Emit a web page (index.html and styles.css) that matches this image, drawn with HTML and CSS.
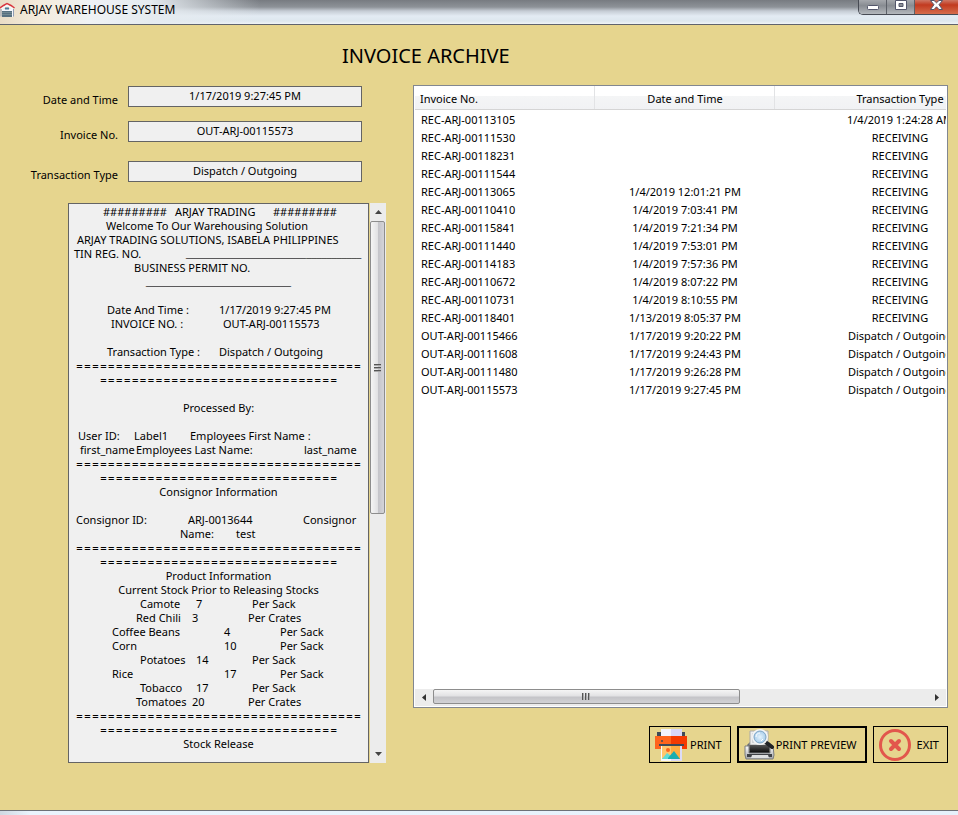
FILE: index.html
```html
<!DOCTYPE html>
<html lang="en">
<head>
<meta charset="utf-8">
<meta name="viewport" content="width=device-width, initial-scale=1">
<title>ARJAY WAREHOUSE SYSTEM</title>
<link rel="stylesheet" href="styles.css">
</head>
<body>
<header class="titlebar">
  <svg class="app-icon" width="15" height="16" viewBox="0 0 15 16" aria-hidden="true">
    <path d="M2 7h11v8H2z" fill="#f4f6fb"/>
    <path d="M0 6 3.500 3.500 7 1.500l4 2L14.500 6" fill="none" stroke="#d9343f" stroke-width="1.500"/>
    <path d="M1.500 7 7 3.500 13 7" fill="none" stroke="#f6f8fb" stroke-width="1.500"/>
    <path d="M1 14.500V7M13.500 14.500V7" stroke="#8f9db4"/>
    <path d="M5 6.500h4" stroke="#4c7c9a" stroke-width="2"/>
    <path d="M2 9h10v6H2z" fill="#577080"/>
    <path d="M2 10.500h10M2 12.500h10" stroke="#728891"/>
  </svg>
  <span class="app-name">ARJAY WAREHOUSE SYSTEM</span>
  <div class="window-buttons">
    <button class="window-button" type="button" aria-label="Minimize"><svg width="12" height="5" viewBox="0 0 12 5"><rect x=".5" y=".5" width="11" height="4" rx="1" fill="#fff" stroke="#53566b"/></svg></button>
    <button class="window-button" type="button" aria-label="Maximize"><svg width="12" height="10" viewBox="0 0 12 10"><path d="M.5.500h11v9H.5zM4 3.500h4v3H4z" fill="#fff" fill-rule="evenodd" stroke="#53566b"/></svg></button>
    <button class="window-button close" type="button" aria-label="Close"><svg width="13" height="10" viewBox="0 0 13 10"><path d="M.5.500h3.500l2.500 2.300L9 .5h3.500L9 4.700l3.500 4.800H9L6.500 6.800 4 9.500H.5L4 4.700z" fill="#fff" stroke="#53566b"/></svg></button>
  </div>
</header>

<main class="window-body">
  <h1>INVOICE ARCHIVE</h1>
  <div class="workspace">
    <section class="details">
      <form class="fields">
        <label for="date">Date and Time</label>
        <input id="date" type="text" value="1/17/2019 9:27:45 PM" readonly>
        <label for="invoice">Invoice No.</label>
        <input id="invoice" type="text" value="OUT-ARJ-00115573" readonly>
        <label for="type">Transaction Type</label>
        <input id="type" type="text" value="Dispatch / Outgoing" readonly>
      </form>
      <div class="receipt">
        <div class="paper">
          <p class="line masthead"><span>#########</span><span>ARJAY TRADING</span><span>#########</span></p>
          <p class="line welcome">Welcome To Our Warehousing Solution</p>
          <p class="line company">ARJAY TRADING SOLUTIONS, ISABELA PHILIPPINES</p>
          <p class="line tin"><span>TIN REG. NO.</span><span class="blank">___________________________________</span></p>
          <p class="line permit">BUSINESS PERMIT NO.</p>
          <p class="line blank">_____________________________</p>
          <p class="line"></p>
          <p class="line pair"><span>Date And Time :</span><span>1/17/2019 9:27:45 PM</span></p>
          <p class="line pair inset"><span>INVOICE NO. :</span><span>OUT-ARJ-00115573</span></p>
          <p class="line"></p>
          <p class="line pair"><span>Transaction Type :</span><span>Dispatch / Outgoing</span></p>
          <p class="line rule">====================================</p>
          <p class="line rule">==============================</p>
          <p class="line"></p>
          <p class="line">Processed By:</p>
          <p class="line"></p>
          <p class="line user"><span>User ID:</span><span>Label1</span><span>Employees First Name :</span></p>
          <p class="line employee"><span>first_name</span><span>Employees Last Name:</span><span>last_name</span></p>
          <p class="line rule">====================================</p>
          <p class="line rule">==============================</p>
          <p class="line">Consignor Information</p>
          <p class="line"></p>
          <p class="line consignor"><span>Consignor ID:</span><span>ARJ-0013644</span><span>Consignor</span></p>
          <p class="line name"><span>Name:</span><span>test</span></p>
          <p class="line rule">====================================</p>
          <p class="line rule">==============================</p>
          <p class="line">Product Information</p>
          <p class="line">Current Stock Prior to Releasing Stocks</p>
          <p class="line stock"><span>Camote</span><span>7</span><span>Per Sack</span></p>
          <p class="line stock crates"><span>Red Chili</span><span>3</span><span>Per Crates</span></p>
          <p class="line stock wide"><span>Coffee Beans</span><span>4</span><span>Per Sack</span></p>
          <p class="line stock wide"><span>Corn</span><span>10</span><span>Per Sack</span></p>
          <p class="line stock"><span>Potatoes</span><span>14</span><span>Per Sack</span></p>
          <p class="line stock wide"><span>Rice</span><span>17</span><span>Per Sack</span></p>
          <p class="line stock"><span>Tobacco</span><span>17</span><span>Per Sack</span></p>
          <p class="line stock crates"><span>Tomatoes</span><span>20</span><span>Per Crates</span></p>
          <p class="line rule">====================================</p>
          <p class="line rule">==============================</p>
          <p class="line">Stock Release</p>
        </div>
        <div class="scrollbar vertical" aria-hidden="true">
          <div class="arrow"><svg width="7" height="4" viewBox="0 0 7 4"><path d="M0 4 3.500 0 7 4z" fill="#444"/></svg></div>
          <div class="track"><div class="thumb"><svg width="7" height="8" viewBox="0 0 7 8"><path d="M0 .5h7M0 3.500h7M0 6.500h7" stroke="#555"/><path d="M0 1.500h7M0 4.500h7M0 7.500h7" stroke="#aaa"/></svg></div></div>
          <div class="arrow"><svg width="7" height="4" viewBox="0 0 7 4"><path d="M0 0h7L3.500 4z" fill="#444"/></svg></div>
        </div>
      </div>
    </section>

    <section class="archive">
      <div class="list">
        <div class="list-view">
          <table>
            <colgroup><col class="col-invoice"><col class="col-date"><col class="col-type"></colgroup>
            <thead><tr><th>Invoice No.</th><th>Date and Time</th><th>Transaction Type</th></tr></thead>
            <tbody>
              <tr><td>REC-ARJ-00113105</td><td></td><td>1/4/2019 1:24:28 AM</td></tr>
              <tr><td>REC-ARJ-00111530</td><td></td><td>RECEIVING</td></tr>
              <tr><td>REC-ARJ-00118231</td><td></td><td>RECEIVING</td></tr>
              <tr><td>REC-ARJ-00111544</td><td></td><td>RECEIVING</td></tr>
              <tr><td>REC-ARJ-00113065</td><td>1/4/2019 12:01:21 PM</td><td>RECEIVING</td></tr>
              <tr><td>REC-ARJ-00110410</td><td>1/4/2019 7:03:41 PM</td><td>RECEIVING</td></tr>
              <tr><td>REC-ARJ-00115841</td><td>1/4/2019 7:21:34 PM</td><td>RECEIVING</td></tr>
              <tr><td>REC-ARJ-00111440</td><td>1/4/2019 7:53:01 PM</td><td>RECEIVING</td></tr>
              <tr><td>REC-ARJ-00114183</td><td>1/4/2019 7:57:36 PM</td><td>RECEIVING</td></tr>
              <tr><td>REC-ARJ-00110672</td><td>1/4/2019 8:07:22 PM</td><td>RECEIVING</td></tr>
              <tr><td>REC-ARJ-00110731</td><td>1/4/2019 8:10:55 PM</td><td>RECEIVING</td></tr>
              <tr><td>REC-ARJ-00118401</td><td>1/13/2019 8:05:37 PM</td><td>RECEIVING</td></tr>
              <tr><td>OUT-ARJ-00115466</td><td>1/17/2019 9:20:22 PM</td><td>Dispatch / Outgoing</td></tr>
              <tr><td>OUT-ARJ-00111608</td><td>1/17/2019 9:24:43 PM</td><td>Dispatch / Outgoing</td></tr>
              <tr><td>OUT-ARJ-00111480</td><td>1/17/2019 9:26:28 PM</td><td>Dispatch / Outgoing</td></tr>
              <tr><td>OUT-ARJ-00115573</td><td>1/17/2019 9:27:45 PM</td><td>Dispatch / Outgoing</td></tr>
            </tbody>
          </table>
        </div>
        <div class="scrollbar horizontal" aria-hidden="true">
          <div class="arrow"><svg width="4" height="7" viewBox="0 0 4 7"><path d="M4 0v7L0 3.500z" fill="#333"/></svg></div>
          <div class="track"><div class="thumb"><svg width="9" height="7" viewBox="0 0 9 7"><path d="M.5 0v7M3.500 0v7M6.500 0v7" stroke="#555"/><path d="M1.500 0v7M4.500 0v7M7.500 0v7" stroke="#aaa"/></svg></div></div>
          <div class="arrow"><svg width="4" height="7" viewBox="0 0 4 7"><path d="M0 0v7l4-3.500z" fill="#333"/></svg></div>
        </div>
      </div>
      <div class="actions">
        <button class="action" type="button">
          <svg width="32" height="32" viewBox="0 0 32 32" aria-hidden="true">
            <path d="M2 3h4v5H2zM26 3h4v5h-4z" fill="#404a57"/>
            <path d="M6 0h10v8H6z" fill="#f3f3fd"/><path d="M16 0h11v8H16z" fill="#d9d8fa"/>
            <path d="M0 7h16v13H0z" fill="#ff641c"/><path d="M16 7h16v13H16z" fill="#f53b02"/>
            <path d="M4 15h25v2H4z" fill="#404a57"/><circle cx="7" cy="12" r="1" fill="#404a57"/>
            <path d="M6 17h10v15H6z" fill="#f8f8ff"/><path d="M16 17h11v15H16z" fill="#dddcf8"/>
            <path d="M7 17h9v13H7z" fill="#ffc66d"/><path d="M16 17h9v13h-9z" fill="#ffad42"/>
            <path d="m7 30 5-6 4 3v3z" fill="#60dcd5"/><path d="m13 29 6-7 6 8H13z" fill="#1aadb0"/>
            <circle cx="13" cy="21" r="2" fill="#ff641c"/>
          </svg>
          <span>PRINT</span>
        </button>
        <button class="action default" type="button">
          <svg width="31" height="31" viewBox="0 0 31 31" aria-hidden="true">
            <defs>
              <linearGradient id="case" x2="0" y2="1"><stop stop-color="#fafafa"/><stop offset="1" stop-color="#a5a7ab"/></linearGradient>
              <linearGradient id="tray" x2="0" y2="1"><stop stop-color="#565656"/><stop offset="1" stop-color="#080808"/></linearGradient>
              <radialGradient id="lens"><stop stop-color="#e6f3fc"/><stop offset="1" stop-color="#9fc8e9"/></radialGradient>
            </defs>
            <path d="m3 16 3-3h19l4 4-2 4H5z" fill="#6b6e72"/>
            <path d="M6 2h18v14H6z" fill="#eee" stroke="#aaa"/>
            <path d="M8 4h12v10H8z" fill="#d2d4d7"/>
            <path d="M6 16h19l1 8H5z" fill="url(#tray)"/>
            <path d="M1 17h4v7h21v-7h3l1 9-1 4H2l-1-4z" fill="url(#case)" stroke="#7b7d80"/>
            <path d="M3 25h25v3H3z" fill="#404247"/><path d="M8 26h16l1 3H7z" fill="#dedfe1"/>
            <path d="m20 12 8 6" stroke="#222427" stroke-width="4" stroke-linecap="round"/>
            <circle cx="16" cy="8" r="7" fill="url(#lens)" stroke="#f4f5f6" stroke-width="2"/>
            <circle cx="16" cy="8" r="6" fill="none" stroke="#7ea5c6"/>
            <path d="M12 8c0-3 2-4 4-4M19 10l-2 2" stroke="#fff" fill="none"/>
          </svg>
          <span>PRINT PREVIEW</span>
        </button>
        <button class="action exit" type="button">
          <svg width="32" height="32" viewBox="0 0 32 32" aria-hidden="true">
            <circle cx="16" cy="16" r="14.500" fill="none" stroke="#e2574c" stroke-width="3"/>
            <path d="m12 12 8 8m0-8-8 8" stroke="#e2574c" stroke-width="4" stroke-linecap="round"/>
          </svg>
          <span>EXIT</span>
        </button>
      </div>
    </section>
  </div>
</main>
<footer class="frame-bottom"></footer>
</body>
</html>
```
FILE: styles.css
```css
* { box-sizing: border-box; }

body {
  margin: 0;
  min-height: 100vh;
  display: flex;
  flex-direction: column;
  font: 11px/14px "Noto Sans", "Open Sans", sans-serif;
  color: #000;
  background: #e6d58e;
  overflow-x: hidden;
}

button, input { font: inherit; color: inherit; border-radius: 0; }
svg { display: block; flex: none; }

/* Window frame */
.titlebar {
  display: flex;
  height: 25px;
  border-bottom: 1px solid #60646e;
  background:
    linear-gradient(90deg, #e9dcc6 0, #f4ecdd 40px, #eff2f5 90px, #e5ebf0 150px, transparent 260px),
    linear-gradient(180deg, #777b81 0, #8d9298 7px, #c5ccd4 11px, #e3ebf3 16px, #dde7ee 21px, #f0f4f8 24px);
}
.app-icon { margin-top: 2px; }
.app-name { margin: 1px 0 0 5px; line-height: 18px; font-size: 12px; }
.window-buttons {
  display: flex;
  height: 15px;
  margin-left: auto;
  border: solid #474b54;
  border-width: 0 0 1px 1px;
  border-radius: 0 0 0 5px;
  overflow: hidden;
}
.window-button {
  display: flex;
  justify-content: center;
  align-items: center;
  width: 28px;
  padding: 0 0 4px;
  border: 0;
  border-right: 1px solid #5c6068;
  background: linear-gradient(#a5a8ad, #888c92 40%, #b4b8bd);
}
.window-button:first-child { padding: 0; }
.window-button.close { width: 43px; border: 0; background: linear-gradient(#ce7765, #c23a20 35%, #d66d4c); }

.window-body { flex: 1; display: flex; flex-direction: column; padding: 0 10px 47px 0; }
h1 { margin: 17px 0 16px 342px; font-size: 20px; line-height: 27px; font-weight: 400; }
.workspace { flex: 1; display: grid; grid-template-columns: 386px minmax(0, 1fr); column-gap: 27px; }
.frame-bottom { height: 5px; border-top: 1px solid #6d7178; background: linear-gradient(90deg, #cfd9e2, #eaf4fd 30px, #e6f1fb); }

/* Selected invoice */
.details { display: flex; flex-direction: column; }
.fields { display: grid; grid-template-columns: 118px 234px; gap: 14px 10px; padding-top: 1px; margin-bottom: 21px; }
.fields label { text-align: right; line-height: 28px; height: 21px; }
.fields input {
  width: 100%;
  height: 21px;
  padding: 0 0 3px;
  border: 1px solid #646464;
  background: #f0f0f0;
  text-align: center;
}
.fields label:last-of-type, .fields input:last-of-type { margin-top: 5px; }

.receipt { flex: 1; display: flex; gap: 1px; margin-left: 68px; }
.paper { width: 301px; border: 1px solid #646464; background: #f0f0f0; padding-top: 1px; white-space: nowrap; }
.line { display: grid; justify-content: center; height: 14px; margin: 0; }
.rule { font-family: Inter, "Open Sans", sans-serif; font-size: 12px; }
.blank { font-family: "Liberation Sans", sans-serif; font-size: 9px; }
.masthead, .tin, .pair, .user, .employee, .consignor, .name, .stock, .company, .welcome, .permit { justify-content: start; }
.masthead { grid-template-columns: 72px 98px auto; padding-left: 34px; }
.welcome { padding-left: 37px; }
.company { padding-left: 8px; }
.tin { grid-template-columns: 112px auto; padding-left: 5px; }
.permit { padding-left: 65px; }
.pair { grid-template-columns: 112px auto; padding-left: 38px; }
.inset { padding-left: 42px; }
.user { grid-template-columns: 56px 56px auto; padding-left: 9px; }
.employee { grid-template-columns: 56px 168px auto; padding-left: 11px; }
.consignor { grid-template-columns: 112px 115px auto; padding-left: 7px; }
.name { grid-template-columns: 56px auto; padding-left: 111px; }
.stock { grid-template-columns: 56px 56px auto; padding-left: 71px; }
.crates { padding-left: 67px; }
.wide { grid-template-columns: 112px 56px auto; padding-left: 43px; }

/* Scroll bars */
.scrollbar { display: flex; background: #ececec; }
.arrow, .thumb { display: flex; align-items: center; justify-content: center; flex: none; }
.track { flex: 1; display: flex; }
.thumb { border: 1px solid #8d8d8d; border-radius: 2px; }
.vertical { flex-direction: column; width: 16px; }
.vertical .arrow { height: 18px; }
.vertical .track { flex-direction: column; }
.vertical .thumb { width: 15px; height: 56%; background: linear-gradient(90deg, #f5f5f5, #e2e2e4 50%, #c4c4c9 55%, #d4d4d8); }
.horizontal { height: 17px; margin: 0 1px 1px; }
.horizontal .arrow { width: 18px; }
.horizontal .thumb { width: 62%; height: 15px; background: linear-gradient(#f5f5f5, #e2e2e4 45%, #c4c4c8 55%, #d2d2d5); }

/* Invoice list */
.archive { display: flex; flex-direction: column; }
.list { flex: 1; display: flex; flex-direction: column; border: 1px solid #828790; background: #fff; }
.list-view { flex: 1; overflow: hidden; margin: 0 1px; }
table { width: 610px; table-layout: fixed; border-collapse: separate; border-spacing: 0; }
.col-invoice, .col-date { width: 180px; }
.col-type { width: 250px; }
th {
  height: 24px;
  padding: 2px 0 0;
  font-weight: 400;
  border: solid #d5d5d5;
  border-width: 0 0 1px;
  background: linear-gradient(#fff 45%, #f4f5f6 45%, #f1f2f4);
  box-shadow: inset -1px 0 #e2e3e5;
}
th:first-child { text-align: left; padding-left: 5px; }
td { height: 18px; padding: 0; line-height: 18px; text-align: center; white-space: nowrap; }
td:first-child { text-align: left; padding-left: 6px; }
tbody tr:first-child td { height: 19px; padding-top: 1px; }

.actions { display: flex; justify-content: flex-end; gap: 6px; margin-top: 18px; }
.action {
  display: flex;
  align-items: center;
  gap: 3px;
  height: 37px;
  padding: 0 8px 0 5px;
  border: 1px solid #000;
  background: transparent;
  white-space: nowrap;
}
.default { border-width: 2px; gap: 1px; }
.exit { gap: 6px; }
```
